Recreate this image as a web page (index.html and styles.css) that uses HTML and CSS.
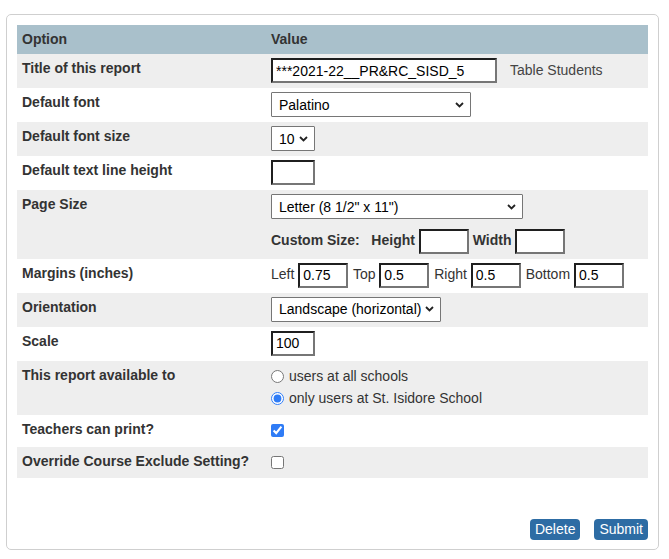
FILE: index.html
```html
<!DOCTYPE html>
<html>
<head>
  <meta charset="UTF-8">
  <title>Report Options</title>
  <link rel="stylesheet" href="styles.css">
</head>
<body>
  <div class="panel">
    <table class="options">
      <tr class="head">
        <th class="col-option">Option</th>
        <th>Value</th>
      </tr>
      <tr class="alt">
        <td class="label">Title of this report</td>
        <td class="value">
          <div class="inline">
            <input type="text" class="title-input" value="***2021-22__PR&amp;RC_SISD_5">
            <span class="note">Table Students</span>
          </div>
        </td>
      </tr>
      <tr>
        <td class="label">Default font</td>
        <td class="value">
          <select class="sel-font"><option>Palatino</option></select>
        </td>
      </tr>
      <tr class="alt">
        <td class="label">Default font size</td>
        <td class="value">
          <select class="sel-size"><option>10</option></select>
        </td>
      </tr>
      <tr>
        <td class="label">Default text line height</td>
        <td class="value"><input type="text" class="small-input"></td>
      </tr>
      <tr class="alt">
        <td class="label">Page Size</td>
        <td class="value">
          <select class="sel-page"><option>Letter (8 1/2" x 11")</option></select>
          <div class="custom-size">
            <b>Custom Size:</b>&nbsp;&nbsp;&nbsp;<b>Height</b> <input type="text" class="num-input"> <b>Width</b> <input type="text" class="num-input">
          </div>
        </td>
      </tr>
      <tr>
        <td class="label">Margins (inches)</td>
        <td class="value margins">
          Left <input type="text" class="num-input" value="0.75"> Top <input type="text" class="num-input" value="0.5"> Right <input type="text" class="num-input" value="0.5"> Bottom <input type="text" class="num-input" value="0.5">
        </td>
      </tr>
      <tr class="alt">
        <td class="label">Orientation</td>
        <td class="value">
          <select class="sel-orient"><option>Landscape (horizontal)</option></select>
        </td>
      </tr>
      <tr>
        <td class="label">Scale</td>
        <td class="value"><input type="text" class="small-input" value="100"></td>
      </tr>
      <tr class="alt">
        <td class="label">This report available to</td>
        <td class="value radios">
          <label class="choice"><input type="radio" name="avail"> users at all schools</label>
          <label class="choice"><input type="radio" name="avail" checked> only users at St. Isidore School</label>
        </td>
      </tr>
      <tr class="short">
        <td class="label">Teachers can print?</td>
        <td class="value"><input type="checkbox" class="check" checked></td>
      </tr>
      <tr class="alt shorter">
        <td class="label">Override Course Exclude Setting?</td>
        <td class="value"><input type="checkbox" class="check"></td>
      </tr>
    </table>

    <div class="actions">
      <button class="btn">Delete</button>
      <button class="btn">Submit</button>
    </div>
  </div>
</body>
</html>
```

FILE: styles.css
```css
body {
  margin: 0;
  padding: 14px 0 0 6px;
  font-family: "Liberation Sans", Arial, sans-serif;
  font-size: 14px;
  color: #333;
  background: #fff;
}
.panel {
  width: 653px;
  height: 536px;
  box-sizing: border-box;
  border: 1px solid #cfcfcf;
  border-radius: 5px;
  padding: 10px;
}
.options {
  width: 631px;
  border-collapse: collapse;
}
.options tr {
  height: 34px;
}
.options tr.head {
  height: 29px;
}
.options tr.alt {
  background-color: #eeeeee;
}
.options tr.short {
  height: 32px;
}
.options tr.shorter {
  height: 31px;
}
.options th {
  background-color: #a9c0cb;
  text-align: left;
  padding: 6px 5px;
  line-height: 17px;
  font-weight: bold;
  color: #333;
}
.options th.col-option {
  width: 239px;
}
.options td {
  vertical-align: top;
  padding: 0;
}
.label {
  padding: 6px 5px 0 5px !important;
  line-height: 17px;
  font-weight: bold;
  color: #333;
}
.value {
  padding: 4px 5px 5px 5px !important;
  line-height: 17px;
}
.inline {
  display: flex;
  align-items: center;
  gap: 13px;
}
.note {
  color: #444;
}
input[type="text"] {
  box-sizing: border-box;
  height: 25px;
  border: 2px solid;
  border-color: #1f1f1f #767676 #767676 #1f1f1f;
  padding: 0 3px;
  font-family: "Liberation Sans", Arial, sans-serif;
  font-size: 14px;
  color: #000;
  background: #fff;
  vertical-align: middle;
  margin: 0;
}
.title-input {
  width: 226px;
}
.small-input {
  width: 44px;
}
.num-input {
  width: 50px;
}
select {
  appearance: none;
  -webkit-appearance: none;
  box-sizing: border-box;
  height: 25px;
  border: 1px solid #767676;
  border-radius: 1px;
  padding: 0 14px 0 7px;
  font-family: "Liberation Sans", Arial, sans-serif;
  font-size: 14px;
  color: #000;
  margin: 0;
  display: block;
  background: #fff url("data:image/svg+xml;utf8,<svg xmlns='http://www.w3.org/2000/svg' width='9' height='6' viewBox='0 0 9 6'><path d='M1 1 L4.5 4.5 L8 1' fill='none' stroke='%23222' stroke-width='1.8'/></svg>") no-repeat right 6px center;
}
.sel-font {
  width: 200px;
}
.sel-size {
  width: 44px;
}
.sel-page {
  width: 252px;
}
.sel-orient {
  width: 170px;
}
.custom-size {
  margin-top: 9px;
  line-height: 25px;
  white-space: nowrap;
}
.custom-size b {
  color: #333;
}
.margins {
  white-space: nowrap;
  color: #333;
}
.margins .num-input {
  margin-right: 1px;
}
.radios {
  padding: 5px 5px !important;
}
.choice {
  display: flex;
  align-items: center;
  height: 22px;
  gap: 5px;
  color: #333;
}
.choice input {
  margin: 0;
  width: 13px;
  height: 13px;
  accent-color: #2f7cf6;
}
.check {
  display: block;
  margin: 5px 0 0 0;
  width: 13px;
  height: 13px;
  accent-color: #2f7cf6;
}
.actions {
  display: flex;
  justify-content: flex-end;
  gap: 14px;
  margin-top: 41px;
}
.btn {
  height: 21px;
  padding: 0 5px;
  background-color: #2d6ca4;
  color: #fff;
  border: none;
  border-radius: 4px;
  font-family: "Liberation Sans", Arial, sans-serif;
  font-size: 14px;
  line-height: 21px;
  cursor: pointer;
}
```
